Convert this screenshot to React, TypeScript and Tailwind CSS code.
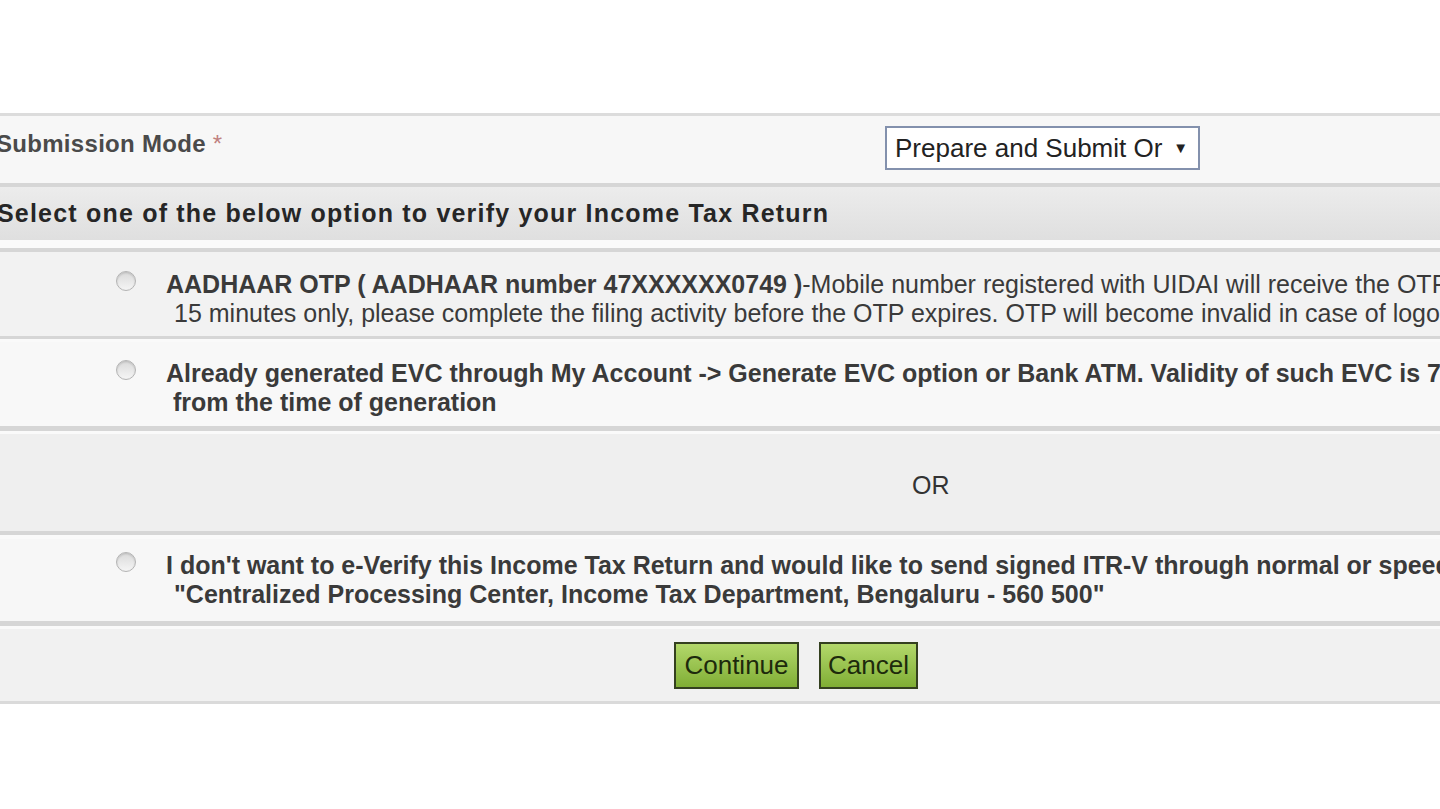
import { FC, ReactNode } from "react";

const font = { fontFamily: '"Liberation Sans", Arial, sans-serif' };

const Radio: FC = () => (
  <span className="mt-[1px] block h-[20px] w-[20px] shrink-0 rounded-full border border-[#b4b4b4] bg-gradient-to-b from-[#dadada] to-[#f5f5f5] shadow-[inset_0_1px_2px_rgba(0,0,0,0.15)]" />
);

const Sep: FC<{ className?: string }> = ({ className }) => (
  <div className={`h-[3px] bg-[#d6d6d6] ${className ?? ""}`} />
);

interface OptionProps {
  lines: ReactNode[];
  className: string;
}

// one radio option row, text lines are cut at the right edge like the original
const OptionRow: FC<OptionProps> = ({ lines, className }) => (
  <div className={`flex items-start pl-[116px] ${className}`}>
    <Radio />
    <div className="ml-[30px] text-[25px] leading-[29px] text-[#3a3a3a] whitespace-nowrap">
      {lines.map((l, i) => (
        <div key={i}>{l}</div>
      ))}
    </div>
  </div>
);

const App: FC = () => {
  return (
    <div className="w-[1440px] h-[809px] overflow-hidden bg-white" style={font}>
      <div className="h-[113px]" />
      <Sep className="h-[2px] bg-[#dcdcdc]" />
      {/* submission mode */}
      <div className="flex h-[67px] items-start bg-[#f7f7f7]">
        <div className="-ml-[4px] mt-[13px] w-[889px] text-[24px] leading-[29px] font-bold text-[#4a4a4a] tracking-[0.3px]">
          Submission Mode <span className="font-normal text-[#c08080]">*</span>
        </div>
        <div className="mt-[10px] flex h-[44px] w-[315px] items-center justify-between border-2 border-[#8391ad] bg-white pl-[8px] pr-[10px] text-[26px] text-[#222]">
          <span className="w-[272px] overflow-hidden whitespace-nowrap">Prepare and Submit Or</span>
          <span className="text-[15px]">▼</span>
        </div>
      </div>
      <Sep className="h-[4px] bg-[#d2d2d2]" />
      {/* header */}
      <div className="flex h-[53px] items-center bg-gradient-to-b from-[#ececec] to-[#dfdfdf]">
        <div className="-ml-[3px] text-[25px] font-bold text-[#262626] tracking-[1.2px]">
          Select one of the below option to verify your Income Tax Return
        </div>
      </div>
      <div className="h-[8px] bg-[#fafafa]" />
      <Sep className="h-[4px]" />
      <OptionRow
        className="h-[84px] bg-[#f2f2f2] pt-[18px]"
        lines={[
          <>
            <span className="font-bold">AADHAAR OTP ( AADHAAR number 47XXXXXX0749 )</span>-Mobile number registered with UIDAI will receive the OTP
          </>,
          <span className="pl-[8px]">
            15 minutes only, please complete the filing activity before the OTP expires. OTP will become invalid in case of logout
          </span>,
        ]}
      />
      <Sep className="h-[3px]" />
      <div className="h-[3px] bg-[#fafafa]" />
      <OptionRow
        className="h-[84px] bg-[#f8f8f8] pt-[17px]"
        lines={[
          <span className="font-bold">
            Already generated EVC through My Account -&gt; Generate EVC option or Bank ATM. Validity of such EVC is 72 hours
          </span>,
          <span className="pl-[7px] font-bold">from the time of generation</span>,
        ]}
      />
      <Sep className="h-[5px] bg-[#d0d0d0]" />
      <div className="h-[3px] bg-[#fafafa]" />
      {/* OR */}
      <div className="h-[97px] bg-[#efefef] pt-[37px] pl-[912px] text-[25px] leading-[29px] text-[#333]">
        OR
      </div>
      <Sep className="h-[4px]" />
      <div className="h-[4px] bg-[#fafafa]" />
      <OptionRow
        className="h-[82px] bg-[#f7f7f7] pt-[12px]"
        lines={[
          <span className="font-bold">
            I don't want to e-Verify this Income Tax Return and would like to send signed ITR-V through normal or speed post to
          </span>,
          <span className="pl-[8px] font-bold">
            "Centralized Processing Center, Income Tax Department, Bengaluru - 560 500"
          </span>,
        ]}
      />
      <Sep className="h-[5px] bg-[#d4d4d4]" />
      <div className="h-[3px] bg-[#fafafa]" />
      {/* buttons */}
      <div className="flex h-[72px] items-start justify-center gap-[20px] bg-[#f1f1f1] pt-[13px] pl-[152px]">
        <button className="h-[47px] w-[125px] border-2 border-[#34401f] bg-gradient-to-b from-[#b3d86a] to-[#80ae34] text-[26px] text-[#1d2a0c]">
          Continue
        </button>
        <button className="h-[47px] w-[99px] border-2 border-[#34401f] bg-gradient-to-b from-[#b3d86a] to-[#80ae34] text-[26px] text-[#1d2a0c]">
          Cancel
        </button>
      </div>
      <Sep className="h-[3px] bg-[#dadada]" />
    </div>
  );
};

export default App;
